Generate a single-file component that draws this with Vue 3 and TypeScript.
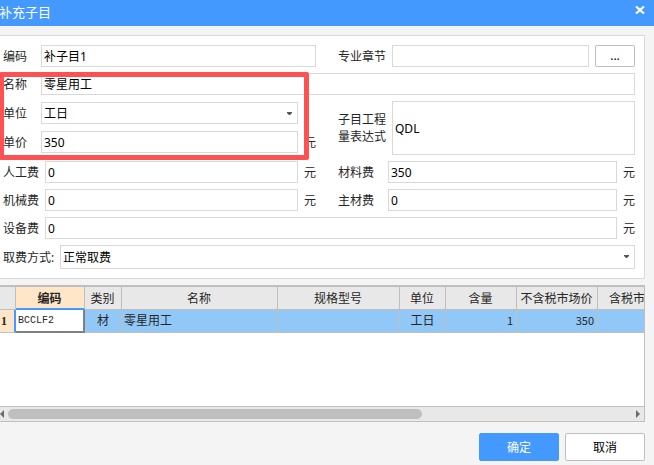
<script setup lang="ts">
import { reactive } from 'vue'

interface Column {
  title: string
  width: number
}

interface Resource {
  code: string
  kind: string
  name: string
  spec: string
  unit: string
  amount: string
  price: string
  taxedPrice: string
}

const form = reactive({
  code: '补子目1',
  chapter: '',
  name: '零星用工',
  unit: '工日',
  unitPrice: '350',
  expression: 'QDL',
  labour: '0',
  material: '350',
  machine: '0',
  mainMaterial: '0',
  equipment: '0',
  feeMode: '正常取费',
})

const columns: Column[] = [
  { title: '编码', width: 69 },
  { title: '类别', width: 37 },
  { title: '名称', width: 156 },
  { title: '规格型号', width: 122 },
  { title: '单位', width: 46 },
  { title: '含量', width: 71 },
  { title: '不含税市场价', width: 81 },
  { title: '含税市场价', width: 84 },
]

const resources: Resource[] = [
  { code: 'BCCLF2', kind: '材', name: '零星用工', spec: '', unit: '工日', amount: '1', price: '350', taxedPrice: '' },
]
</script>

<template>
  <main class="dialog">
    <header class="titlebar">
      <h1>补充子目</h1>
      <button class="close" type="button" aria-label="关闭">
        <svg width="10" height="8" viewBox="0 0 10 8"><path d="M1 0.5 L9 7.5 M9 0.5 L1 7.5" stroke="#fff" stroke-width="2.2" /></svg>
      </button>
    </header>

    <form class="panel" @submit.prevent>
      <div class="pair">
        <div class="field">
          <label class="w38" for="code">编码</label>
          <input id="code" v-model="form.code" type="text" />
        </div>
        <div class="field">
          <label class="w54" for="chapter">专业章节</label>
          <input id="chapter" v-model="form.chapter" type="text" />
          <button class="browse" type="button">...</button>
        </div>
      </div>

      <div class="field">
        <label class="w38" for="name">名称</label>
        <input id="name" v-model="form.name" type="text" />
      </div>

      <div class="pair">
        <div class="stack">
          <div class="field no-unit">
            <label class="w38" for="unit">单位</label>
            <span class="combo">
              <select id="unit" v-model="form.unit"><option>工日</option></select>
              <svg width="5" height="3" viewBox="0 0 5 3"><path d="M0 0H5V1L3 3H2L0 1Z" fill="#555" /></svg>
            </span>
          </div>
          <div class="field">
            <label class="w38" for="unitPrice">单价</label>
            <input id="unitPrice" v-model="form.unitPrice" type="text" />
            <span class="yuan">元</span>
          </div>
        </div>
        <div class="field">
          <label class="w54 tall" for="expression">子目工程<br />量表达式</label>
          <input id="expression" v-model="form.expression" class="big" type="text" />
        </div>
      </div>

      <div class="pair">
        <div class="field">
          <label class="w42" for="labour">人工费</label>
          <input id="labour" v-model="form.labour" type="text" />
          <span class="yuan">元</span>
        </div>
        <div class="field">
          <label class="w50" for="material">材料费</label>
          <input id="material" v-model="form.material" type="text" />
          <span class="yuan">元</span>
        </div>
      </div>

      <div class="pair">
        <div class="field">
          <label class="w42" for="machine">机械费</label>
          <input id="machine" v-model="form.machine" type="text" />
          <span class="yuan">元</span>
        </div>
        <div class="field">
          <label class="w50" for="mainMaterial">主材费</label>
          <input id="mainMaterial" v-model="form.mainMaterial" type="text" />
          <span class="yuan">元</span>
        </div>
      </div>

      <div class="field">
        <label class="w42" for="equipment">设备费</label>
        <input id="equipment" v-model="form.equipment" type="text" />
        <span class="yuan">元</span>
      </div>

      <div class="field">
        <label class="w57" for="feeMode">取费方式:</label>
        <span class="combo mode">
          <select id="feeMode" v-model="form.feeMode"><option>正常取费</option></select>
          <svg width="5" height="3" viewBox="0 0 5 3"><path d="M0 0H5V1L3 3H2L0 1Z" fill="#555" /></svg>
        </span>
      </div>

      <div class="highlight"></div>
    </form>

    <section class="grid">
      <div class="viewport">
        <table>
          <colgroup>
            <col class="index" />
            <col v-for="c in columns" :key="c.title" :style="{ width: c.width + 'px' }" />
          </colgroup>
          <thead>
            <tr>
              <th></th>
              <th v-for="(c, i) in columns" :key="c.title" :class="{ current: i === 0 }">{{ c.title }}</th>
            </tr>
          </thead>
          <tbody>
            <tr v-for="(r, i) in resources" :key="r.code">
              <th class="rownum" scope="row">{{ i + 1 }}</th>
              <td class="active">{{ r.code }}</td>
              <td class="center">{{ r.kind }}</td>
              <td>{{ r.name }}</td>
              <td>{{ r.spec }}</td>
              <td class="center">{{ r.unit }}</td>
              <td class="number">{{ r.amount }}</td>
              <td class="number">{{ r.price }}</td>
              <td class="number">{{ r.taxedPrice }}</td>
            </tr>
          </tbody>
        </table>
      </div>
      <div class="scrollbar">
        <button type="button" aria-label="向左滚动">
          <svg width="4" height="8" viewBox="0 0 4 8"><path d="M4 0V8L0 4Z" fill="#6b6b73" /></svg>
        </button>
        <div class="track"><div class="thumb"></div></div>
        <button type="button" aria-label="向右滚动">
          <svg width="4" height="8" viewBox="0 0 4 8"><path d="M0 0V8L4 4Z" fill="#6b6b73" /></svg>
        </button>
      </div>
    </section>

    <footer class="actions">
      <button class="primary" type="button">确定</button>
      <button type="button">取消</button>
    </footer>
  </main>
</template>

<style>
body {
  margin: 0;
  background: #f4f4f4;
}
</style>

<style scoped>
.dialog,
.dialog * {
  box-sizing: border-box;
}
.dialog {
  display: flex;
  flex-direction: column;
  min-height: 100vh;
  overflow: hidden;
  font: 12px/18px "Noto Sans", "Noto Sans CJK SC", sans-serif;
  color: #262626;
}
button,
input,
select {
  margin: 0;
  padding: 0;
  font: inherit;
  color: #000;
}
.titlebar {
  display: flex;
  justify-content: space-between;
  height: 26px;
  background: #4499ff;
}
h1 {
  margin: 0 0 0 -1px;
  font-size: 13px;
  font-weight: 400;
  line-height: 24px;
  color: #fff;
}
.close {
  display: flex;
  align-items: center;
  height: 20px;
  padding: 0 9px;
  border: 0;
  background: none;
}
.panel {
  position: relative;
  display: flex;
  flex-direction: column;
  gap: 6px;
  margin: 9px 9px 0 0;
  padding: 9px 9px 9px 3px;
  border: 1px solid #d9d9d9;
  border-left: 0;
  background: #fff;
}
.pair {
  display: grid;
  grid-template-columns: minmax(0, 313fr) minmax(0, 297fr);
  column-gap: 22px;
}
.stack {
  display: flex;
  flex-direction: column;
  gap: 7px;
  padding-top: 1px;
}
.field {
  display: flex;
  align-items: center;
}
.no-unit {
  padding-right: 18px;
}
label {
  flex: none;
  white-space: nowrap;
}
label,
.yuan {
  padding-top: 2px;
}
.tall {
  padding-top: 0;
  line-height: 17px;
}
.w38 { width: 38px; }
.w42 { width: 42px; }
.w50 { width: 50px; }
.w54 { width: 54px; }
.w57 { width: 57px; }
input,
select {
  flex: 1;
  min-width: 0;
  width: 100%;
  height: 22px;
  padding: 0 2px;
  border: 1px solid #d9d9d9;
  border-radius: 0;
  background: #fff;
  outline: none;
}
.big {
  height: 54px;
}
select {
  display: block;
  padding-top: 1px;
  appearance: none;
}
.combo {
  position: relative;
  flex: 1;
}
.combo svg {
  position: absolute;
  right: 6px;
  top: 10px;
  pointer-events: none;
}
.mode select {
  height: 24px;
}
.yuan {
  width: 12px;
  margin-left: 6px;
}
.browse {
  width: 40px;
  height: 22px;
  margin-left: 6px;
  border: 1px solid #bfbfbf;
  border-radius: 2px;
  background: #fff;
}
.highlight {
  position: absolute;
  left: -1px;
  top: 36px;
  width: 310px;
  height: 88px;
  border: 5px solid #ff5153;
  border-radius: 2px;
  pointer-events: none;
}
.grid {
  display: flex;
  flex: 1;
  flex-direction: column;
  margin: 6px 9px 0 0;
  border: 1px solid #bfbfbf;
  border-width: 2px 1px 1px 0;
  background: #fff;
}
.viewport {
  flex: 1;
  overflow: hidden;
}
table {
  width: 682px;
  table-layout: fixed;
  border-collapse: separate;
  border-spacing: 0;
}
.index {
  width: 16px;
}
th,
td {
  height: 23px;
  padding: 0 2px;
  border: solid #bfbfbf;
  border-width: 0 1px 1px 0;
  line-height: 18px;
  text-align: left;
  white-space: nowrap;
}
th {
  padding: 2px 1px 0 0;
  background: #e8e8e8;
  font-weight: 400;
  text-align: center;
}
td {
  background: #92c8f7;
}
.current {
  border-bottom: 2px solid #4499ff;
  background: #ffe6c8;
  font-weight: 700;
}
.rownum {
  padding: 0 6px 0 0;
  border-right: 2px solid #4499ff;
  background: #ffe6c8;
  font-family: "Liberation Serif", serif;
  font-weight: 700;
}
.active {
  border-right: 2px solid #808080;
  border-bottom: 2px solid #808080;
  background: #fff;
  font-family: "Liberation Mono", monospace;
  font-size: 10px;
}
.center {
  text-align: center;
}
.number {
  padding: 0 3px 2px 0;
  font-family: "Noto Sans CJK SC", sans-serif;
  font-size: 11px;
  text-align: right;
}
.scrollbar {
  display: flex;
  align-items: center;
  height: 15px;
  border-top: 1px solid #bfbfbf;
  background: #e8e8e8;
}
.scrollbar button {
  display: flex;
  width: 8px;
  border: 0;
  background: none;
}
.track {
  flex: 1;
}
.thumb {
  width: 66%;
  height: 10px;
  border-radius: 5px;
  background: #bfbfbf;
}
.actions {
  display: flex;
  justify-content: flex-end;
  gap: 6px;
  padding: 11px 9px 4px;
}
.actions button {
  width: 80px;
  height: 28px;
  padding-top: 1px;
  border: 1px solid #bfbfbf;
  border-radius: 2px;
  background: #fff;
}
.actions .primary {
  border-color: #4499ff;
  background: #4499ff;
  color: #fff;
}
</style>
